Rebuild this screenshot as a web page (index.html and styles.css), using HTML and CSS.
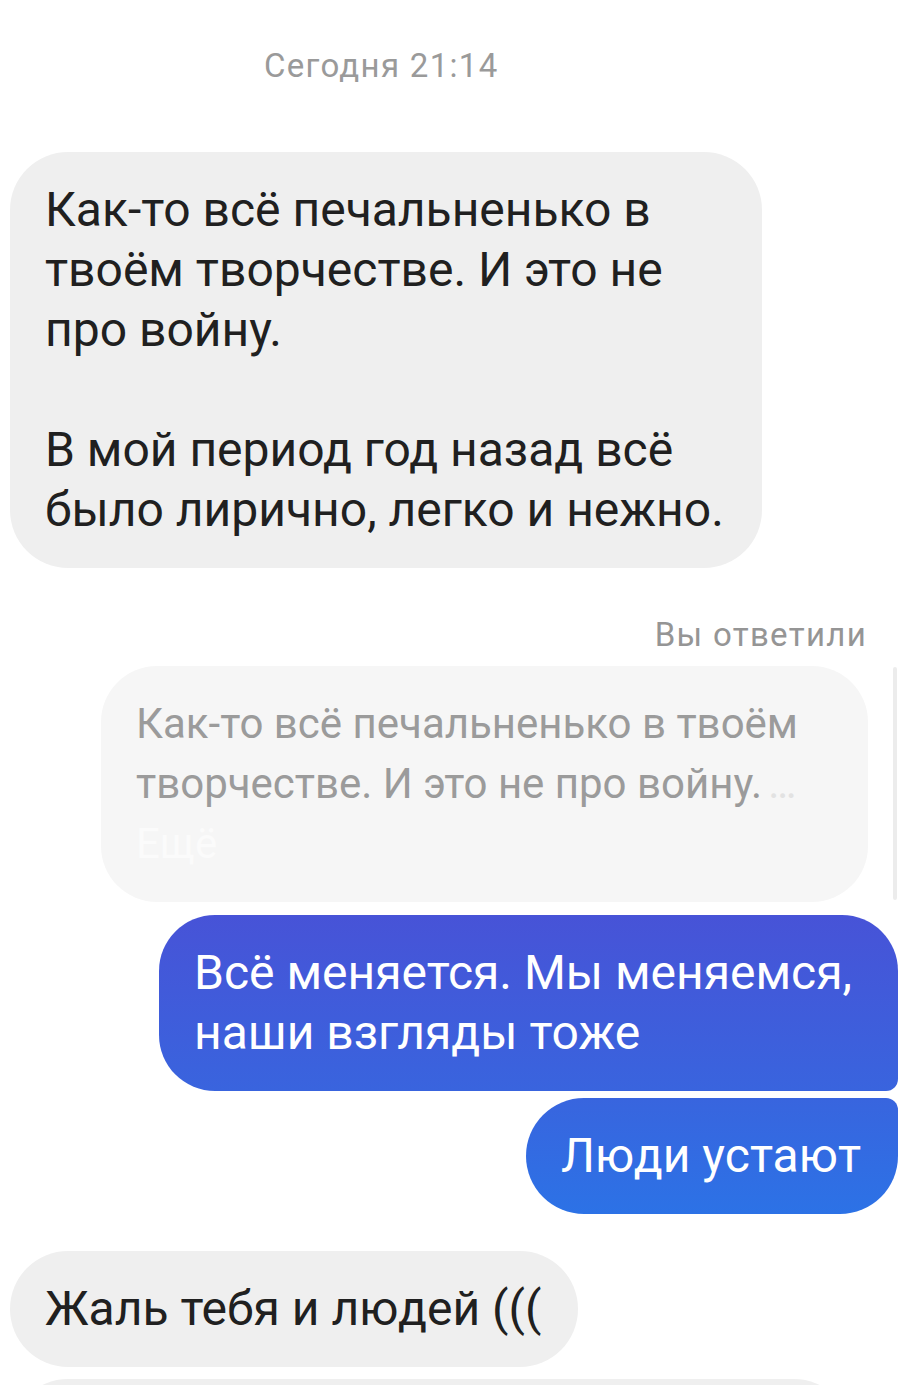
FILE: index.html
```html
<!DOCTYPE html>
<html lang="ru">
<head>
<meta charset="utf-8">
<title>Чат</title>
<link rel="stylesheet" href="styles.css">
</head>
<body>
<div class="chat">
  <div class="date">Сегодня 21:14</div>

  <div class="row in gap-first">
    <div class="bubble in-bubble">
      <p>Как-то всё печальненько в твоём творчестве. И это не про войну.</p>
      <p class="para">В мой период год назад всё было лирично, легко и нежно.</p>
    </div>
  </div>

  <div class="reply-label">Вы ответили</div>

  <div class="quote-row">
    <div class="quote">
      <p class="quote-text">Как-то всё печальненько в твоём творчестве. И это не про войну.</p>
      <p class="more">Ещё</p>
    </div>
    <div class="quote-bar"></div>
  </div>

  <div class="row out gap-quote">
    <div class="bubble out-bubble out-top">Всё меняется. Мы меняемся, наши взгляды тоже</div>
  </div>

  <div class="row out gap-tight">
    <div class="bubble out-bubble out-bottom">Люди устают</div>
  </div>

  <div class="row in gap-group">
    <div class="bubble in-bubble">Жаль тебя и людей (((</div>
  </div>

  <div class="row in gap-next">
    <div class="bubble in-bubble cut"></div>
  </div>
</div>
</body>
</html>
```

FILE: styles.css
```css
html, body {
  margin: 0;
  padding: 0;
  background: #ffffff;
  overflow: hidden;
}

body {
  width: 915px;
  height: 1385px;
  font-family: Roboto, "Noto Sans", sans-serif;
}

.chat {
  box-sizing: border-box;
  height: 1385px;
  overflow: hidden;
  padding-top: 46px;
}

.date {
  font-size: 33px;
  line-height: 40px;
  letter-spacing: 1.3px;
  color: #9a9a9a;
  padding-left: 264px;
}

.row {
  display: flex;
}

.row.in {
  justify-content: flex-start;
  padding-left: 10px;
}

.row.out {
  justify-content: flex-end;
  padding-right: 17px;
}

.gap-first { margin-top: 66px; }
.gap-quote { margin-top: 13px; }
.gap-tight { margin-top: 7px; }
.gap-group { margin-top: 37px; }
.gap-next { margin-top: 12px; }

.bubble {
  box-sizing: border-box;
  font-size: 48px;
  line-height: 60px;
  padding: 28px 37px 28px 35px;
}

.bubble p {
  margin: 0;
}

.bubble .para {
  margin-top: 60px;
}

.in-bubble {
  background: #efefef;
  color: #202020;
  border-radius: 58px;
  max-width: 752px;
}

.in-bubble.cut {
  width: 842px;
  max-width: none;
  height: 120px;
}

.out-bubble {
  color: #ffffff;
  max-width: 739px;
  background: linear-gradient(180deg, #5a45cc 0px, #4753d7 915px, #3964de 1091px, #2c72e6 1214px, #2479ea 1385px) fixed;
}

.out-top {
  padding-right: 40px;
  border-radius: 56px 56px 12px 56px;
}

.out-bottom {
  border-radius: 58px 12px 58px 58px;
}

.reply-label {
  margin-top: 47px;
  font-size: 33px;
  line-height: 40px;
  letter-spacing: 1.3px;
  color: #959595;
  text-align: right;
  padding-right: 48px;
}

.quote-row {
  margin-top: 11px;
  display: flex;
  justify-content: flex-end;
  gap: 25px;
  padding-right: 18px;
}

.quote {
  box-sizing: border-box;
  width: 767px;
  background: #f6f6f6;
  border-radius: 56px;
  padding: 28px 30px 28px 35px;
  font-size: 42px;
  line-height: 60px;
  color: #9b9b9b;
}

.quote p {
  margin: 0;
}

.quote-text::after {
  content: "…";
  margin-left: 6px;
  color: #e2e2e2;
}

.quote .more {
  color: #fbfbfb;
}

.quote-bar {
  width: 4px;
  margin: 1px 0 2px;
  background: #ececec;
  border-radius: 2px;
}
```
